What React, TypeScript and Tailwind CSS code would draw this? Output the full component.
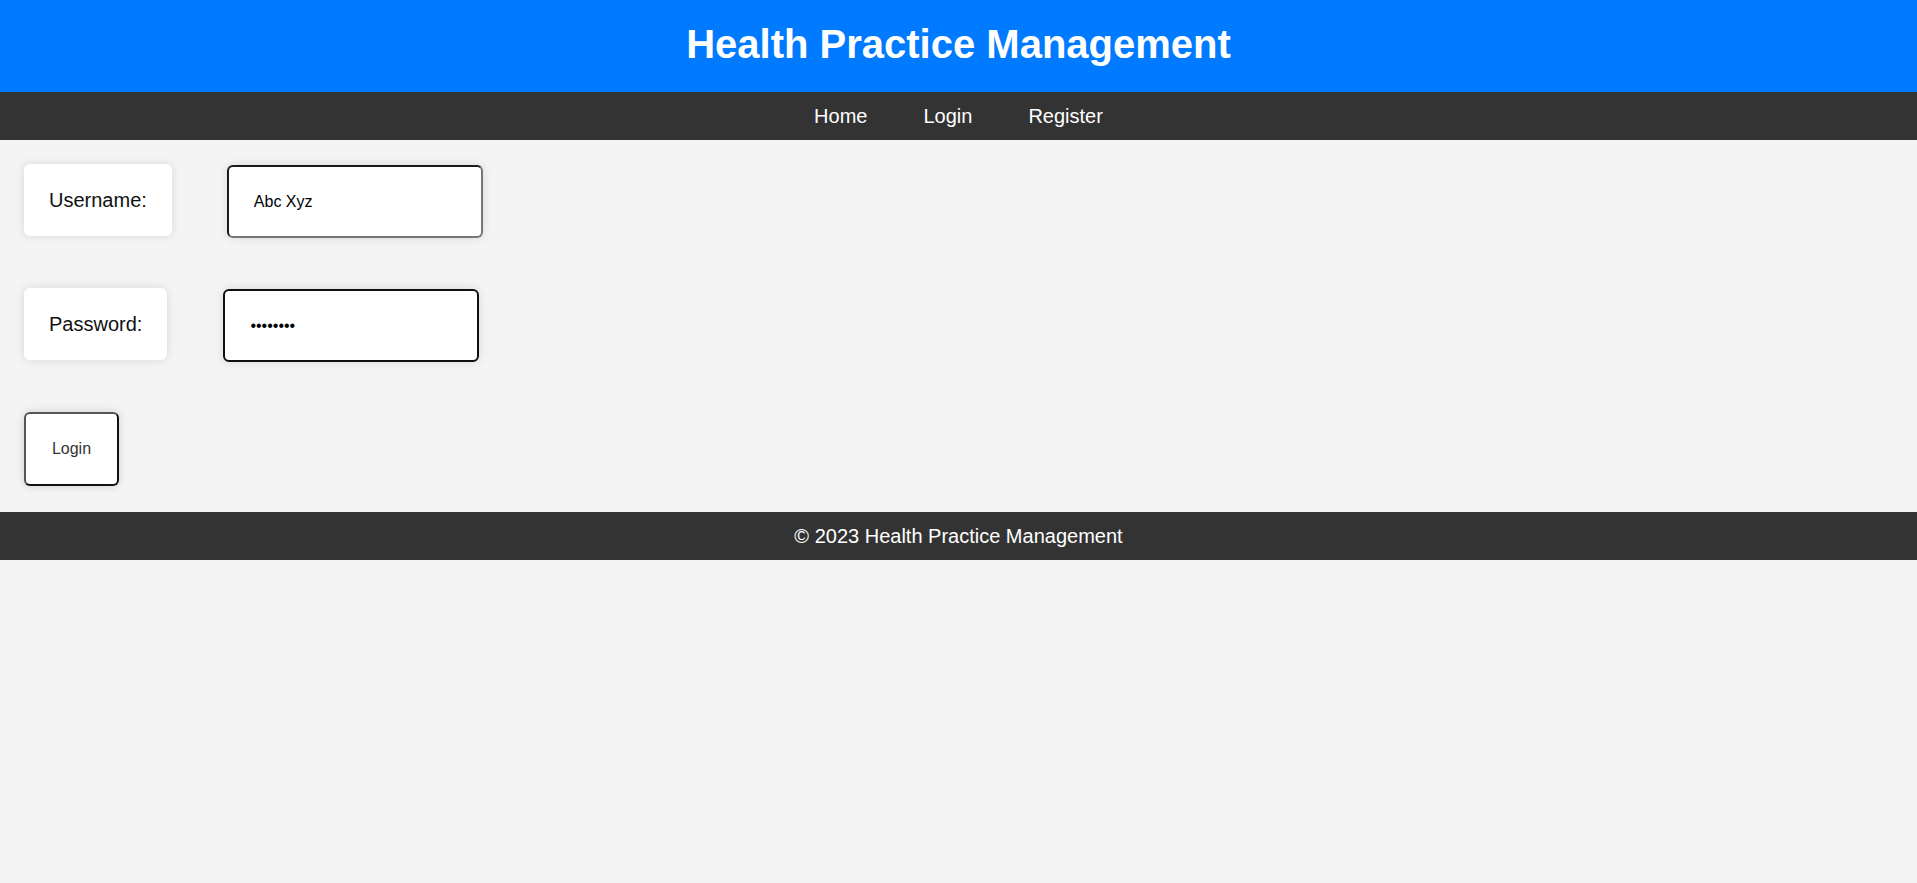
import { useEffect, useRef, useState } from 'react'

export default function App() {
  const [username, setUsername] = useState('Abc Xyz')
  const [password, setPassword] = useState('password')
  const pwRef = useRef<HTMLInputElement>(null)

  useEffect(() => {
    const el = pwRef.current
    if (el) {
      el.focus()
      el.setSelectionRange(el.value.length, el.value.length)
    }
  }, [])

  return (
    <div className="min-h-screen bg-[#f4f4f4] font-['Liberation_Sans',Arial,sans-serif]">
      {/* HEADER */}
      <header className="h-[92px] pb-[5px] bg-[#007bff] flex items-center justify-center">
        <h1 className="text-[40px] font-bold text-white leading-none">
          Health Practice Management
        </h1>
      </header>

      {/* NAV */}
      <nav className="h-[48px] bg-[#333333] flex items-center justify-center gap-[56px] text-[20px] text-white">
        <a href="#">Home</a>
        <a href="#">Login</a>
        <a href="#">Register</a>
      </nav>

      {/* FORM */}
      <main className="px-6 pt-6 pb-[26px] flex flex-col gap-[50px]">
        <div className="flex items-start">
          <label className="h-[72px] px-[25px] flex items-center bg-white rounded-md text-[20px] text-[#111] shadow-[0_0_10px_rgba(0,0,0,0.12)]">
            Username:
          </label>
          <input
            value={username}
            onChange={(e) => setUsername(e.target.value)}
            className="ml-[55px] mt-[1px] w-[256px] h-[73px] pl-[25px] bg-white rounded-md border-2 border-t-[#1a1a1a] border-l-[#1a1a1a] border-b-[#767676] border-r-[#767676] text-[16px] text-black outline-none shadow-[0_0_10px_rgba(0,0,0,0.12)]"
          />
        </div>

        <div className="flex items-start">
          <label className="h-[72px] px-[25px] flex items-center bg-white rounded-md text-[20px] text-[#111] shadow-[0_0_10px_rgba(0,0,0,0.12)]">
            Password:
          </label>
          <input
            ref={pwRef}
            type="password"
            value={password}
            onChange={(e) => setPassword(e.target.value)}
            className="ml-[56px] mt-[1px] w-[256px] h-[73px] pl-[25px] bg-white rounded-md border-2 border-[#101010] text-[16px] text-black outline-none shadow-[0_0_10px_rgba(0,0,0,0.12)]"
          />
        </div>

        <div>
          <button className="w-[95px] h-[74px] bg-white rounded-md border-2 border-t-[#555] border-l-[#555] border-b-[#111] border-r-[#111] text-[16px] text-[#333] shadow-[0_0_10px_rgba(0,0,0,0.15)]">
            Login
          </button>
        </div>
      </main>

      {/* FOOTER */}
      <footer className="h-[48px] bg-[#333333] flex items-center justify-center text-[20px] text-white">
        © 2023 Health Practice Management
      </footer>
    </div>
  )
}
